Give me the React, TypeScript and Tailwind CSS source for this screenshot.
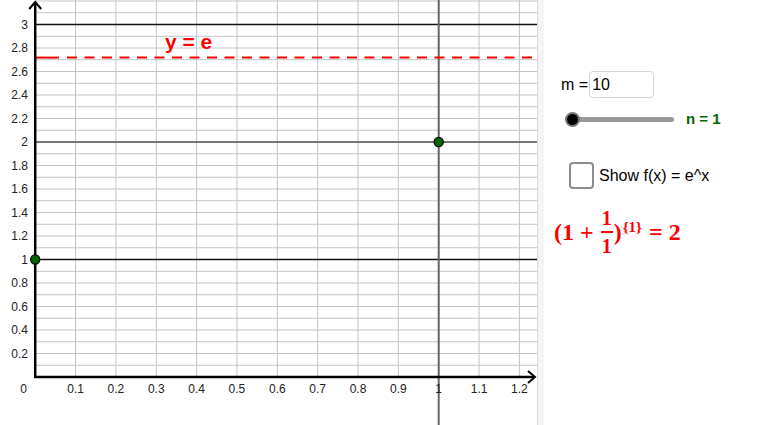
import React from 'react';

// graph scale: 1 unit on x = 403.5px, 1 unit on y = 117.5px
const X0 = 35.2;
const XS = 403.5;
const Y0 = 377;
const YS = 117.5;
const px = (x: number) => X0 + x * XS;
const py = (y: number) => Y0 - y * YS;

const fmt = (v: number) => (Math.abs(v - Math.round(v)) < 1e-6 ? String(Math.round(v)) : v.toFixed(1));

function Graph() {
    const vLines = Array.from({ length: 12 }, (_, i) => (i + 1) / 10);
    const hLines = Array.from({ length: 32 }, (_, i) => (i + 1) / 10);
    const yLabels = Array.from({ length: 15 }, (_, i) => ((i + 1) * 2) / 10);
    const xLabels = Array.from({ length: 12 }, (_, i) => (i + 1) / 10);

    return (
        <svg width="537" height="425" viewBox="0 0 537 425" className="block shrink-0">
            {/* grid */}
            {vLines.map(v => (
                <line key={'v' + v} x1={px(v)} y1={0} x2={px(v)} y2={Y0} stroke="#c4c4c4" strokeWidth="1" />
            ))}
            {hLines.map(v => (
                <line key={'h' + v} x1={X0} y1={py(v)} x2={537} y2={py(v)} stroke="#c4c4c4" strokeWidth="1" />
            ))}

            {/* lines y = 1, 2, 3 and x = 1 */}
            <line x1={X0} y1={py(3)} x2={537} y2={py(3)} stroke="#111" strokeWidth="1.6" />
            <line x1={X0} y1={py(2)} x2={537} y2={py(2)} stroke="#555" strokeWidth="1.4" />
            <line x1={X0} y1={py(1)} x2={537} y2={py(1)} stroke="#111" strokeWidth="1.6" />
            <line x1={px(1)} y1={0} x2={px(1)} y2={425} stroke="#666" strokeWidth="2" />

            {/* y = e */}
            <line x1={X0} y1={py(Math.E)} x2={59} y2={py(Math.E)} stroke="#ff0000" strokeWidth="2" />
            <line x1={67} y1={py(Math.E)} x2={537} y2={py(Math.E)} stroke="#ff0000" strokeWidth="2" strokeDasharray="10 7.5" />
            <text x="165" y="49" fill="#ff0000" fontSize="21" fontWeight="700" fontFamily="'Liberation Sans', Arial, sans-serif">
                y = e
            </text>

            {/* axes */}
            <line x1={X0} y1={2} x2={X0} y2={Y0 + 1} stroke="#000" strokeWidth="2.5" />
            <line x1={X0 - 1} y1={Y0} x2={535} y2={Y0} stroke="#000" strokeWidth="2.5" />
            <polyline points={`${X0 - 6},9 ${X0},2 ${X0 + 6},9`} fill="none" stroke="#000" strokeWidth="2" />
            <polyline points={`528,371 535,377 528,383`} fill="none" stroke="#000" strokeWidth="2" />

            {/* labels */}
            <g fontSize="12" fill="#222" fontFamily="'Liberation Sans', Arial, sans-serif">
                {yLabels.map(v => (
                    <text key={'yl' + v} x="28" y={py(v) + 4.2} textAnchor="end">
                        {fmt(v)}
                    </text>
                ))}
                {xLabels.map(v => (
                    <text key={'xl' + v} x={px(v)} y="393" textAnchor="middle">
                        {fmt(v)}
                    </text>
                ))}
                <text x="23.5" y="393" textAnchor="middle">0</text>
            </g>

            {/* points */}
            <circle cx={X0} cy={py(1)} r="4.6" fill="#006600" stroke="#000" strokeWidth="1.2" />
            <circle cx={px(1)} cy={py(2)} r="4.6" fill="#006600" stroke="#000" strokeWidth="1.2" />
        </svg>
    );
}

function Formula() {
    return (
        <div className="flex items-center text-[#ff0000] font-bold font-['Liberation_Serif','DejaVu_Serif',serif] leading-none">
            <span className="text-[24px]">(1</span>
            <span className="text-[24px] mx-[6px]">+</span>
            <span className="flex flex-col items-center text-[20px] px-[1px]">
                <span className="leading-none">1</span>
                <span className="h-[2px] w-[12px] bg-[#ff0000] my-[3px]" />
                <span className="leading-none">1</span>
            </span>
            <span className="text-[24px]">)</span>
            <span className="text-[15px] self-start mt-[12px] ml-[1px]">{'{1}'}</span>
            <span className="text-[24px] ml-[7px]">= 2</span>
        </div>
    );
}

function Panel() {
    return (
        <div className="flex-1 flex flex-col pt-[71px] pl-[17px] font-['Liberation_Sans',Arial,sans-serif] text-black">
            <div className="flex items-center h-[27px]">
                <span className="text-[16px]">m =</span>
                <div className="ml-[1px] w-[65px] h-[27px] border-[1.5px] border-[#d6d6d6] rounded-[4px] flex items-center pl-[2px] text-[16px]">
                    10
                </div>
            </div>

            <div className="flex items-center h-[14px] mt-[14px]">
                <div className="relative ml-[4px] w-[109px] h-[14px] flex items-center">
                    <div className="ml-[7px] w-[102px] h-[5px] rounded-full bg-[#9a9a9a]" />
                    <div className="absolute left-0 top-0 w-[15px] h-[15px] -mt-[0.5px] rounded-full bg-black border-[2.5px] border-[#7a7a7a]" />
                </div>
                <span className="ml-[12px] text-[15px] font-bold text-[#006400]">n = 1</span>
            </div>

            <div className="flex items-center mt-[36px]">
                <div className="ml-[8px] w-[25px] h-[27px] border-2 border-[#8c8c8c] rounded-[4px] bg-white" />
                <span className="ml-[5px] text-[16px]">Show f(x) = e^x</span>
            </div>

            <div className="-ml-[7px] mt-[19px]">
                <Formula />
            </div>
        </div>
    );
}

export default function App() {
    return (
        <div className="w-[783px] h-[425px] flex bg-white overflow-hidden">
            <Graph />
            <div className="w-[7px] h-full bg-[#f4f4f4] border-l border-[#d8d8d8] shrink-0" />
            <Panel />
        </div>
    );
}
